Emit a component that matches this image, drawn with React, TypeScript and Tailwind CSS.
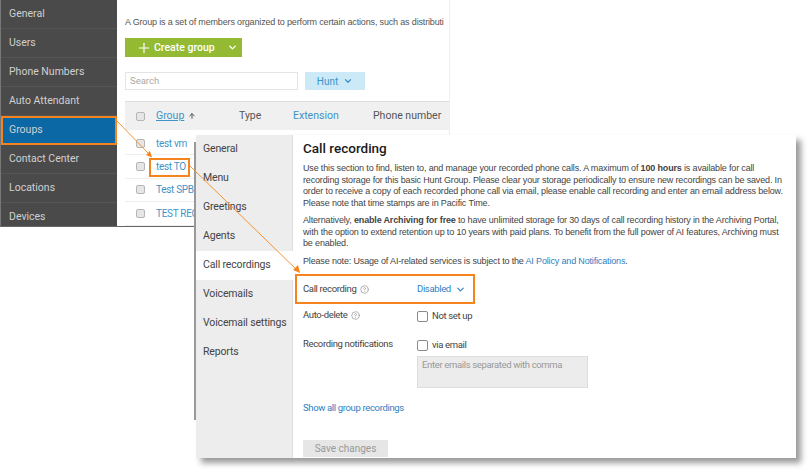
import { ChevronDown, CircleHelp, Plus, ArrowUp } from 'lucide-react';

const DIN = "font-['Roboto',sans-serif]";
const BODY = "font-['Liberation_Sans',sans-serif]";
const FORM = "font-['Roboto',sans-serif] text-[9.5px] tracking-[-0.35px]";

const NAV = ['General', 'Users', 'Phone Numbers', 'Auto Attendant', 'Groups', 'Contact Center', 'Locations', 'Devices'];
const ROWS = ['test vm', 'test TO', 'Test SPB Hunt', 'TEST REG'];
const TABS = ['General', 'Menu', 'Greetings', 'Agents', 'Call recordings', 'Voicemails', 'Voicemail settings', 'Reports'];

function Check({ className = '' }: { className?: string }) {
  return <span className={`block w-[9px] h-[9px] rounded-[2px] border border-[#b5b5b5] bg-[#e6e6e6] shrink-0 ${className}`} />;
}

function Box() {
  return <span className="block w-[11px] h-[11px] rounded-[2px] border border-[#8a8a8a] bg-white shrink-0" />;
}

function BackWindow() {
  return (
    <div className={`flex w-[450px] h-[227px] border-b border-[#666] overflow-hidden ${DIN}`}>
      <aside className="w-[117px] shrink-0 bg-[#4a4a4a] border-l border-[#777] flex flex-col">
        {NAV.map(n => (
          <div
            key={n}
            className={`h-[29px] shrink-0 flex items-center pl-2 text-[10.5px] border-b border-[#555] text-[#d0d0d0] ${n === 'Groups' ? 'bg-[#0b68a4] outline-2 -outline-offset-2 outline-[#f5841f]' : ''}`}
          >
            {n}
          </div>
        ))}
      </aside>
      <main className="flex-1 pl-2 border-r border-[#eee] overflow-hidden">
        <p className={`mt-[16px] text-[9px] leading-3 tracking-[-0.16px] text-[#555] whitespace-nowrap ${BODY}`}>A Group is a set of members organized to perform certain actions, such as distributi</p>
        <div className="mt-[10px] w-[117px] h-[19px] bg-[#94ba33] flex items-center text-white text-[10.5px] font-medium pl-[11px]">
          <Plus size={16} strokeWidth={1.75} />
          <span className="ml-[2px] flex-1">Create group</span>
          <ChevronDown size={11} strokeWidth={3} className="mr-[4px]" />
        </div>
        <div className="mt-[15px] flex gap-[7px]">
          <div className="w-[173px] h-[18px] border border-[#e4e4e4] flex items-center pl-[4px] text-[9.5px] text-[#aaa]">Search</div>
          <div className="w-[60px] h-[18px] bg-[#cce9f7] flex items-center justify-center gap-[5px] text-[10px] text-[#3f93c6]">
            Hunt <ChevronDown size={10} strokeWidth={3} />
          </div>
        </div>
        <div className="mt-[11px] h-[29px] bg-[#f0f0f0] border-t border-[#ddd] flex items-center text-[10.5px] text-[#555]">
          <Check className="ml-[11px]" />
          <span className="ml-[11px] w-[28px] underline text-[#3f93c6]">Group</span>
          <ArrowUp size={8} strokeWidth={3} className="ml-[4px] text-[#555]" />
          <span className="ml-[43px] w-[54px]">Type</span>
          <span className="w-[80px] text-[#3f93c6]">Extension</span>
          <span>Phone number</span>
        </div>
        <div className="pt-[2px]">
          {ROWS.map(r => (
            <div key={r} className="h-[23.4px] flex items-center border-b border-[#eee] text-[10px] tracking-[-0.3px] text-[#3f93c6] whitespace-nowrap">
              <Check className="ml-[11px]" />
              <span className="ml-[11px]">{r}</span>
            </div>
          ))}
        </div>
      </main>
    </div>
  );
}

function FrontWindow() {
  return (
    <div className="absolute left-[196px] top-[135px] w-[600px] h-[323px] flex bg-white shadow-[5px_5px_6px_rgba(0,0,0,0.4)]">
      <aside className={`w-[97px] shrink-0 bg-[#ededed] border-r border-[#ddd] flex flex-col ${DIN}`}>
        {TABS.map(t => (
          <div
            key={t}
            className={`h-[29px] shrink-0 flex items-center pl-[7px] pb-[2px] text-[10.5px] tracking-[-0.15px] whitespace-nowrap text-[#444] ${t === 'Call recordings' ? 'bg-white -mr-px' : ''}`}
          >
            {t}
          </div>
        ))}
      </aside>
      <main className={`flex-1 pl-[10px] text-[#444] whitespace-nowrap ${BODY}`}>
        <h2 className={`mt-[4px] text-[13.5px] leading-[18px] font-medium text-[#1a1a1a] ${DIN}`}>Call recording</h2>
        <p className="mt-[6px] text-[9px] leading-[11.5px] tracking-[-0.16px]">
          Use this section to find, listen to, and manage your recorded phone calls. A maximum of <b>100 hours</b> is available for call<br />
          recording storage for this basic Hunt Group. Please clear your storage periodically to ensure new recordings can be saved. In<br />
          order to receive a copy of each recorded phone call via email, please enable call recording and enter an email address below.<br />
          Please note that time stamps are in Pacific Time.
        </p>
        <p className="mt-[6px] text-[9px] leading-[11.5px] tracking-[-0.16px]">
          Alternatively, <b>enable Archiving for free</b> to have unlimited storage for 30 days of call recording history in the Archiving Portal,<br />
          with the option to extend retention up to 10 years with paid plans. To benefit from the full power of AI features, Archiving must<br />
          be enabled.
        </p>
        <p className="mt-[6px] text-[9px] leading-[11.5px] tracking-[-0.16px]">
          Please note: Usage of AI-related services is subject to the <span className="text-[#2f80c2]">AI Policy and Notifications</span>.
        </p>
        <div className={`mt-[8px] flex items-center h-[29px] ${FORM}`}>
          <span className="w-[114px] flex items-center gap-[4px]">Call recording <CircleHelp size={9} className="text-[#999]" /></span>
          <span className="flex items-center gap-[4px] text-[#2f80c2]">Disabled <ChevronDown size={11} strokeWidth={2.5} /></span>
        </div>
        <div className={`mt-[4px] flex items-center h-[14px] ${FORM}`}>
          <span className="w-[114px] flex items-center gap-[4px]">Auto-delete <CircleHelp size={9} className="text-[#999]" /></span>
          <span className="flex items-center pt-[2px]">
            <Box />
            <span className="ml-[4px]">Not set up</span>
          </span>
        </div>
        <div className={`mt-[15px] flex items-center h-[14px] ${FORM}`}>
          <span className="w-[114px]">Recording notifications</span>
          <span className="flex items-center pt-[2px]">
            <Box />
            <span className="ml-[4px]">via email</span>
          </span>
        </div>
        <div className={`mt-[5px] ml-[114px] w-[171px] h-[32px] bg-[#ececec] border border-[#ddd] px-[4px] py-[1px] text-[#999] ${FORM}`}>Enter emails separated with comma</div>
        <div className={`mt-[12px] leading-[15px] text-[#2f80c2] ${FORM}`}>Show all group recordings</div>
        <div className={`mt-[25px] w-[85px] h-[17px] bg-[#e6e6e6] flex items-center justify-center text-[10px] text-[#999] ${DIN}`}>Save changes</div>
      </main>
    </div>
  );
}

export default function App() {
  return (
    <div className="relative w-[811px] h-[473px] bg-white overflow-hidden">
      <BackWindow />
      <FrontWindow />
      {/* left edge shadow of the overlaid window */}
      <div className="absolute left-[194px] top-[142px] w-[2px] h-[278px] bg-[#999]" />
      {/* callout frames and arrows */}
      <div className="absolute left-[149px] top-[158px] w-[41px] h-[19px] border-2 border-[#f5841f]" />
      <div className="absolute left-[295px] top-[274px] w-[180px] h-[30px] border-2 border-[#f5841f]" />
      <svg className="absolute inset-0 pointer-events-none" width="811" height="473" fill="none">
        <path d="M116 120 L150 155" stroke="#f5932f" strokeWidth="1" />
        <path d="M152 157.500 L146 155 L150 151 Z" fill="#f5841f" />
        <path d="M190 166 L299 272" stroke="#f5932f" strokeWidth="1" />
        <path d="M300 273 L293 270 L298 265 Z" fill="#f5841f" />
      </svg>
    </div>
  );
}
